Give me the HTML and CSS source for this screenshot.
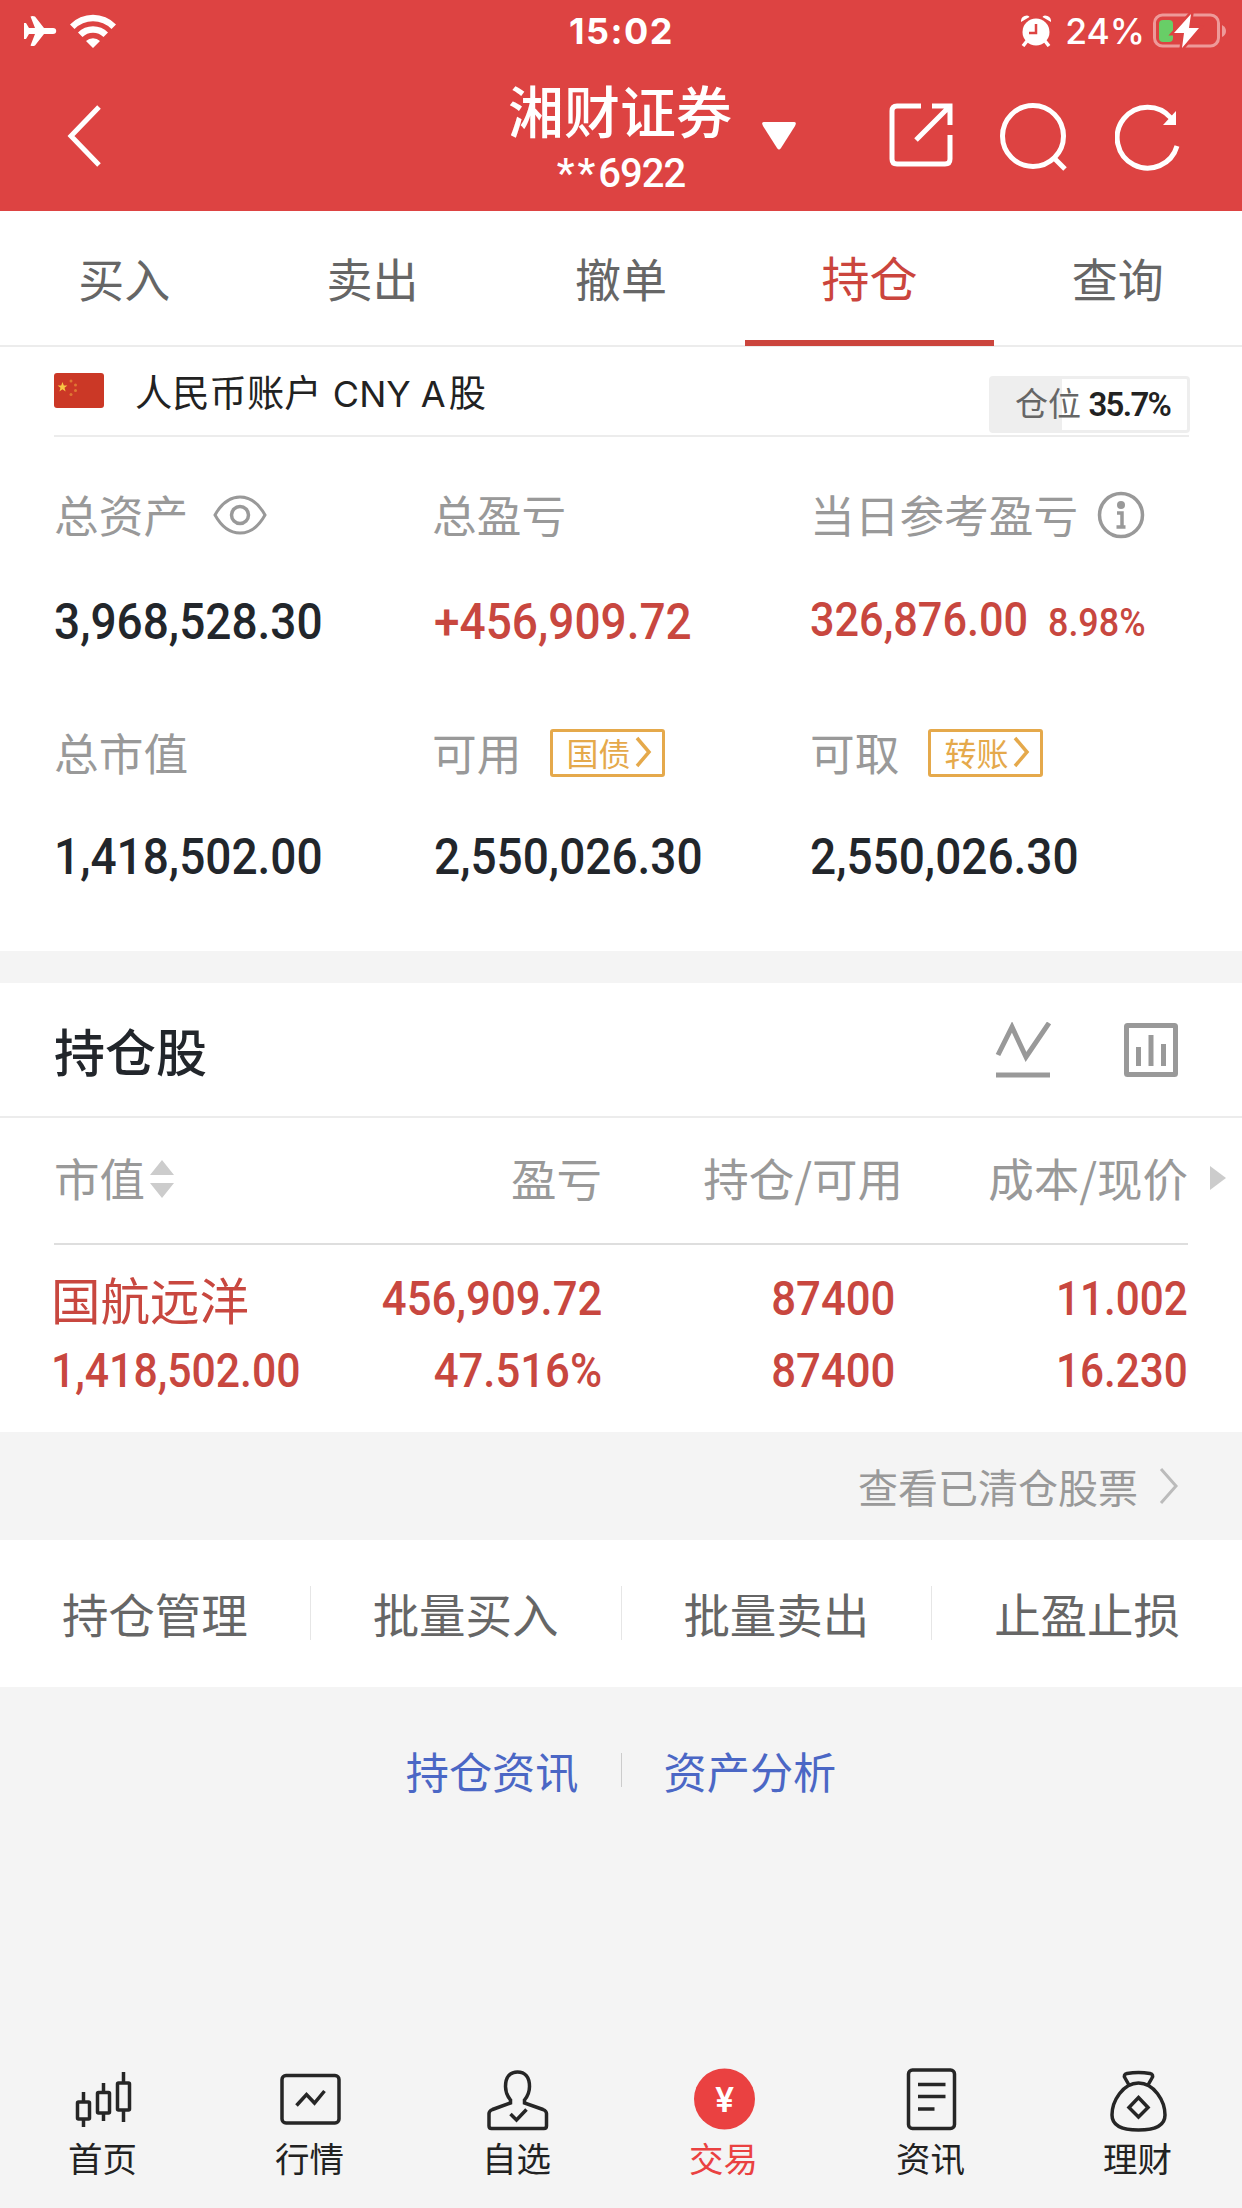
FILE: index.html
```html
<!DOCTYPE html>
<html lang="zh-CN">
<head>
<meta charset="UTF-8">
<title>持仓</title>
<link rel="stylesheet" href="styles.css">
</head>
<body>
  <header class="header">
    <div class="status">
      <div class="status-left">
        <svg width="34" height="30" viewBox="0 0 34 30"><path fill="#fff" d="M0 7h2l3 5h6L6.500 0.500Q8.500-.5 11 .5L20 12h9a3 2.800 0 0 1 0 6h-9L11 29.500Q8.500 30.500 6.500 29.500L11 18H5l-3 5H0z"/></svg>
        <svg width="46" height="34" viewBox="0 0 46 34"><path fill="#fff" d="M0 10.500a32 32 0 0 1 46 0l-4.500 4.500a26 26 0 0 0-37 0zM8 18.500a21 21 0 0 1 30 0l-4.500 4.500a15 15 0 0 0-21 0zM16 27a10 10 0 0 1 14 0l-7 7z"/></svg>
      </div>
      <div class="time">15:02</div>
      <div class="status-right">
        <svg width="30" height="32" viewBox="0 0 30 32"><circle cx="15" cy="17" r="13.500" fill="#fff"/><path d="M0 7Q-.5 1 6 .5q2 0 2.500 1.500zM30 7q.5-6-6-6.500-2 0-2.500 1.500z" fill="#fff"/><path d="M6 26l-4 5M24 26l4 5" stroke="#fff" stroke-width="3.500"/><path d="M15 9v9H8" fill="none" stroke="#dd4342" stroke-width="2.500"/></svg>
        <span class="percent">24%</span>
        <svg width="74" height="36" viewBox="0 0 74 36"><rect x="1.500" y="2" width="64" height="31" rx="8" fill="none" stroke="#ee9a99" stroke-width="3"/><path d="M69 12q4 2 4 6t-4 6z" fill="#ee9a99"/><rect x="6" y="7" width="14" height="22" rx="4" fill="#68ce67"/><path d="M38 1L21 20h10l-2 15 17-20H36z" fill="#fff" stroke="#dd4342" stroke-width="5" paint-order="stroke"/></svg>
      </div>
    </div>
    <div class="nav">
      <svg class="back" width="40" height="64" viewBox="0 0 40 64"><path d="M34 3L6 32l28 29" fill="none" stroke="#fff" stroke-width="5"/></svg>
      <div class="account">
        <div>
          <h1 class="broker">湘财证券</h1>
          <div class="account-no"><span class="stars">**</span>6922</div>
        </div>
        <svg class="caret" width="34" height="28" viewBox="0 0 34 28"><path d="M2 0h30q3 0 1 4L19 26q-2 3-4 0L1 4Q-1 0 2 0z" fill="#fff"/></svg>
      </div>
      <div class="nav-icons">
        <svg width="64" height="64" viewBox="0 0 64 64"><path d="M32 3H8q-5 0-5 5v48q0 5 5 5h48q5 0 5-5V32M43 3h18v19M61 3L27 37" fill="none" stroke="#fff" stroke-width="5"/></svg>
        <svg width="68" height="68" viewBox="0 0 68 68"><circle cx="33" cy="33" r="30.500" fill="none" stroke="#fff" stroke-width="5"/><path d="M54 55l11 11" stroke="#fff" stroke-width="5"/></svg>
        <svg width="66" height="68" viewBox="0 0 66 68"><path d="M62 43A30.500 30.500 0 1 1 56 15" fill="none" stroke="#fff" stroke-width="5"/><path d="M61 8v14H48z" fill="#fff"/></svg>
      </div>
    </div>
  </header>

  <nav class="tabs">
    <a class="tab">买入</a>
    <a class="tab">卖出</a>
    <a class="tab">撤单</a>
    <a class="tab active">持仓</a>
    <a class="tab">查询</a>
  </nav>

  <section class="summary">
    <div class="currency">
      <svg class="flag" width="50" height="35" viewBox="0 0 50 35"><rect width="50" height="35" rx="3" fill="#cb3826"/><path d="M8.500 9l1.300 3.500h3.600l-2.900 2.300 1.100 3.600-3.100-2.200-3.100 2.200 1.100-3.600-2.900-2.300h3.600z" fill="#f8c744"/><g fill="#e07833"><circle cx="17" cy="8" r="1.500"/><circle cx="21.500" cy="12" r="1.500"/><circle cx="21.500" cy="17.500" r="1.500"/><circle cx="17" cy="21.500" r="1.500"/></g></svg>
      <span class="currency-name">人民币账户 <span class="latin">CNY A</span>股</span>
      <div class="position"><span>仓位</span> <b>35.7%</b></div>
    </div>
    <div class="assets">
      <div class="asset">
        <div class="label">总资产
          <svg class="eye" width="54" height="40" viewBox="0 0 54 40"><path d="M2 20Q12 2 27 2t25 18Q42 38 27 38T2 20z" fill="none" stroke="#999" stroke-width="3"/><circle cx="27" cy="20" r="8.500" fill="none" stroke="#999" stroke-width="3.500"/></svg>
        </div>
        <div class="value"><span class="num">3,968,528.30</span></div>
      </div>
      <div class="asset">
        <div class="label">总盈亏</div>
        <div class="value red"><span class="num">+456,909.72</span></div>
      </div>
      <div class="asset">
        <div class="label">当日参考盈亏
          <svg class="info" width="48" height="48" viewBox="0 0 48 48"><circle cx="24" cy="24" r="21.500" fill="none" stroke="#999" stroke-width="3.500"/><circle cx="24" cy="14" r="4" fill="#999"/><path d="M20 22h5v14M19.500 36h9" fill="none" stroke="#999" stroke-width="3.500"/></svg>
        </div>
        <div class="value red today"><span class="num">326,876.00</span><span class="num rate">8.98%</span></div>
      </div>
      <div class="asset lower">
        <div class="label">总市值</div>
        <div class="value"><span class="num">1,418,502.00</span></div>
      </div>
      <div class="asset lower">
        <div class="label">可用
          <span class="tag">国债<svg width="18" height="32" viewBox="0 0 18 32"><path d="M2 2l12 14L2 30" fill="none" stroke="#e5a94b" stroke-width="3.500"/></svg></span>
        </div>
        <div class="value"><span class="num">2,550,026.30</span></div>
      </div>
      <div class="asset lower">
        <div class="label">可取
          <span class="tag">转账<svg width="18" height="32" viewBox="0 0 18 32"><path d="M2 2l12 14L2 30" fill="none" stroke="#e5a94b" stroke-width="3.500"/></svg></span>
        </div>
        <div class="value"><span class="num">2,550,026.30</span></div>
      </div>
    </div>
  </section>

  <section class="holdings">
    <div class="holdings-title">
      <h2>持仓股</h2>
      <svg width="56" height="56" viewBox="0 0 56 56"><path d="M3 33L17 5l14 30L54 1M1 53h54" fill="none" stroke="#999" stroke-width="5"/></svg>
      <svg class="chart" width="54" height="54" viewBox="0 0 54 54"><rect x="2.500" y="2.500" width="49" height="49" rx="1" fill="none" stroke="#999" stroke-width="5"/><path d="M14.500 24v19M27 12v31M39.500 21v22" stroke="#999" stroke-width="5"/></svg>
    </div>
    <div class="row row-head">
      <div class="cell">市值<svg class="sort" width="24" height="40" viewBox="0 0 24 40"><path d="M12 1l12 15H0zM12 39l12-15H0z" fill="#ccc"/></svg></div>
      <div class="cell">盈亏</div>
      <div class="cell">持仓/可用</div>
      <div class="cell">成本/现价</div>
      <svg class="more" width="16" height="24" viewBox="0 0 16 24"><path d="M0 0l16 12L0 24z" fill="#ccc"/></svg>
    </div>
    <div class="row row-stock">
      <div class="cell"><div class="stock">国航远洋</div><div><span class="num">1,418,502.00</span></div></div>
      <div class="cell"><div><span class="num">456,909.72</span></div><div><span class="num">47.516%</span></div></div>
      <div class="cell qty"><div><span class="num">87400</span></div><div><span class="num">87400</span></div></div>
      <div class="cell price"><div><span class="num">11.002</span></div><div><span class="num">16.230</span></div></div>
    </div>
  </section>

  <div class="cleared">查看已清仓股票
    <svg width="20" height="38" viewBox="0 0 20 38"><path d="M2 2l15 17L2 36" fill="none" stroke="#bbb" stroke-width="3"/></svg>
  </div>

  <div class="actions">
    <a>持仓管理</a>
    <a>批量买入</a>
    <a>批量卖出</a>
    <a>止盈止损</a>
  </div>

  <div class="links">
    <a>持仓资讯</a>
    <a>资产分析</a>
  </div>

  <footer class="tabbar">
    <a class="item">
      <svg class="icon" viewBox="0 0 70 70"><rect x="9.500" y="37" width="12" height="17" rx="1"/><path d="M15.500 27v10M15.500 54v8"/><rect x="29.500" y="27.500" width="12" height="20.500" rx="1"/><path d="M35.500 18v10M35.500 48v8"/><rect x="49.500" y="18" width="12" height="27" rx="1"/><path d="M55.500 7v11M55.500 45v12"/></svg>
      首页
    </a>
    <a class="item">
      <svg class="icon" viewBox="0 0 70 70"><rect x="7" y="10.500" width="57" height="47.500" rx="4"/><path d="M21.500 40.500l10-11 8 8.500 10-12"/></svg>
      行情
    </a>
    <a class="item">
      <svg class="icon" viewBox="0 0 70 70"><path d="M28.500 38v-3q-5-6-5-13.500C23.500 12 28 7 35.500 7s12 5 12 14.500q0 7.500-5 13.500v3l18.500 6.500q3.500 1.500 3.500 4V61q0 2.500-2.500 2.500H9.500Q7 63.500 7 61V48.500q0-2.500 3.500-4z"/><path d="M28.500 49l6 6 10-10.500"/></svg>
      自选
    </a>
    <a class="item current">
      <svg class="icon" viewBox="0 0 70 70"><circle class="coin" cx="35.500" cy="34" r="30.500"/><text class="yen" x="35.500" y="47">¥</text></svg>
      交易
    </a>
    <a class="item">
      <svg class="icon" viewBox="0 0 70 70"><rect x="12.500" y="5" width="46" height="58.500" rx="4"/><path d="M22 19.500h27.500M22 31.500h27.500M22 44h16.500"/></svg>
      资讯
    </a>
    <a class="item">
      <svg class="icon" viewBox="0 0 70 70"><path d="M26 20l-4-7q-2-3.500 2-4.500 11.500-2 23 0 4 1 2 4.500l-4 7"/><path d="M35.500 18C20 18 9 36 9 50c0 10 8 15 26.500 15S62 60 62 50C62 36 51 18 35.500 18z"/><path d="M35.500 32.500L45 42.500l-9.500 9.500-9.500-9.500z"/></svg>
      理财
    </a>
  </footer>
</body>
</html>
```
FILE: styles.css
```css
* {
    box-sizing: border-box;
}

body {
    margin: 0;
    width: 1242px;
    height: 2208px;
    overflow: hidden;
    display: flex;
    flex-direction: column;
    background: #f4f4f4;
    font-family: "Noto Sans CJK SC", sans-serif;
    color: #666;
}

svg {
    display: block;
    flex: none;
}

h1, h2 {
    margin: 0;
    font-weight: 500;
}

.num {
    display: inline-block;
    font-family: Roboto, sans-serif;
    font-weight: 500;
    vertical-align: top;
    transform: scaleX(0.92);
    transform-origin: left;
    white-space: nowrap;
}

/* Header */
.header {
    height: 211px;
    background: #dd4342;
    color: #fff;
}

.status {
    display: grid;
    grid-template-columns: 1fr auto 1fr;
    align-items: center;
    height: 62px;
    padding: 0 15px 0 24px;
    font-family: Inter, sans-serif;
    font-size: 35px;
}

.status-left,
.status-right {
    display: flex;
    align-items: center;
    gap: 12px;
}

.status-right {
    justify-content: flex-end;
    gap: 11px;
}

.time {
    font-size: 36px;
    font-weight: 700;
    letter-spacing: 1.500px;
    padding-right: 8px;
}

.percent {
    margin: 0 -3px 0 3px;
    font-size: 35.500px;
    font-weight: 500;
}

.nav {
    display: grid;
    grid-template-columns: 1fr auto 1fr;
    height: 149px;
    padding: 0 61px 0 65px;
}

.back {
    margin-top: 42px;
}

.account {
    display: flex;
    gap: 30px;
    padding-left: 58px;
    text-align: center;
}

.broker {
    font-size: 56px;
    line-height: 60px;
    margin-top: 17px;
}

.account-no {
    font-family: Roboto, sans-serif;
    font-size: 40px;
    font-weight: 500;
    line-height: 44px;
    margin-top: 13px;
    padding-left: 2px;
    letter-spacing: -1px;
}

.stars {
    letter-spacing: 3px;
}

.caret {
    margin-top: 60px;
}

.nav-icons {
    display: flex;
    justify-content: flex-end;
    gap: 47px;
    padding-top: 41px;
}

/* Tabs */
.tabs {
    display: flex;
    height: 136px;
    background: #fff;
    border-bottom: 2px solid #ececec;
}

.tab {
    flex: 1;
    height: 135px;
    font-size: 46px;
    line-height: 132px;
    text-align: center;
}

.tab.active {
    border-bottom: 6px solid #cb453d;
    color: #cb453d;
    font-size: 48px;
    line-height: 131px;
}

/* Account summary */
.summary {
    height: 604px;
    padding: 0 53px 0 54px;
    background: #fff;
}

.currency {
    display: flex;
    height: 90px;
    border-bottom: 2px solid #ececec;
}

.flag {
    margin-top: 26px;
}

.currency-name {
    margin-left: 31px;
    color: #222;
    font-size: 37.300px;
    line-height: 88px;
}

.latin {
    font-family: Inter, sans-serif;
    font-size: 36px;
    margin: 0 3px 0 3px;
}

.position {
    width: 201px;
    height: 57px;
    margin: 29px -1px 0 auto;
    padding-left: 23px;
    border: 3px solid #eee;
    border-radius: 4px;
    background: linear-gradient(to right, #eee 35.700%, #fff 35.700%);
    font-size: 33px;
    line-height: 47px;
    white-space: nowrap;
}

.position b {
    font-family: Roboto, sans-serif;
    font-weight: 600;
    color: #222;
    letter-spacing: -1.700px;
}

.assets {
    display: grid;
    grid-template-columns: 378px 378px 1fr;
    grid-auto-rows: 238px;
    padding-top: 45px;
}

.label {
    display: flex;
    align-items: center;
    height: 64px;
    color: #999;
    font-size: 44.700px;
    line-height: 64px;
    white-space: nowrap;
}

.value {
    display: flex;
    align-items: baseline;
    height: 60px;
    margin-top: 46px;
    color: #22262b;
    font-size: 50px;
    line-height: 60px;
    white-space: nowrap;
}

.value.red {
    color: #c8473f;
}

.asset:nth-child(3n+2) .value {
    padding-left: 2px;
}

.lower .value {
    margin-top: 43px;
}

.value.today {
    margin-top: 44px;
    font-size: 48px;
}

.today .num:first-child {
    transform: scaleX(0.9);
}

.rate {
    margin-left: -4px;
    font-size: 39px;
}

.eye {
    margin: 2px 0 0 25px;
}

.info {
    margin: 2px 0 0 19px;
}

.tag {
    display: flex;
    align-items: center;
    justify-content: space-between;
    width: 115px;
    height: 48px;
    margin: 1px 0 0 29px;
    padding: 0 9px 2px 13px;
    border: 3px solid #e5a94b;
    border-radius: 3px;
    color: #e5a94b;
    font-size: 32px;
    line-height: 38px;
}

/* Holdings */
.holdings {
    margin-top: 32px;
    height: 449px;
    background: #fff;
}

.holdings-title {
    display: flex;
    align-items: center;
    height: 135px;
    padding: 0 64px 0 54px;
    border-bottom: 2px solid #ececec;
}

.holdings-title h2 {
    flex: 1;
    color: #22262b;
    font-size: 51px;
    line-height: 60px;
}

.chart {
    margin-left: 73px;
}

.row {
    display: grid;
    grid-template-columns: 280px 268px 301px 285px;
    margin: 0 54px;
    text-align: right;
}

.row .cell:first-child {
    text-align: left;
}

.row-head {
    position: relative;
    height: 127px;
    border-bottom: 2px solid #dedede;
    color: #999;
    font-size: 45.500px;
    line-height: 118px;
}

.row-head .cell:first-child {
    display: flex;
    align-items: center;
    height: 118px;
}

.sort {
    margin: 4px 0 0 5px;
}

.more {
    position: absolute;
    right: -38px;
    top: 48px;
}

.row-stock {
    padding-top: 18px;
    color: #c8473f;
    font-size: 48px;
    line-height: 72px;
}

.row-stock .num {
    transform: scaleX(0.91);
    transform-origin: right;
}

.row-stock .cell:first-child {
    margin-left: -3px;
}

.row-stock .cell:first-child .num {
    transform: scaleX(0.89);
    transform-origin: left;
}

.row-stock .price .num {
    transform: scaleX(0.88);
}

.stock {
    font-size: 49.500px;
}

.qty {
    padding-right: 8px;
}

/* Links below the list */
.cleared {
    display: flex;
    align-items: center;
    justify-content: flex-end;
    gap: 21px;
    height: 108px;
    padding-right: 63px;
    color: #999;
    font-size: 40px;
}

.actions {
    display: flex;
    align-items: center;
    height: 147px;
    padding-bottom: 2px;
    background: #fff;
    font-size: 46.500px;
    line-height: 54px;
}

.actions a {
    flex: 1;
    text-align: center;
}

.actions a:not(:last-child) {
    border-right: 1px solid #e6e6e6;
}

.links {
    display: flex;
    justify-content: center;
    margin-top: 66px;
    color: #4b67c5;
    font-size: 43.200px;
    line-height: 34px;
}

.links a {
    padding: 0 42px;
}

.links a + a {
    border-left: 1px solid #ccc;
}

/* Bottom bar */
.tabbar {
    display: flex;
    height: 143px;
    margin: auto 1px 0 -1px;
}

.item {
    flex: 1;
    display: flex;
    flex-direction: column;
    align-items: center;
    color: #222;
    font-size: 34.500px;
    line-height: 44px;
}

.item.current {
    color: #ea4141;
}

.icon {
    width: 70px;
    height: 70px;
    fill: none;
    stroke: #262626;
    stroke-width: 3.500px;
}

.coin {
    fill: #ea4141;
    stroke: none;
}

.yen {
    fill: #fff;
    stroke: none;
    font-family: Inter, sans-serif;
    font-size: 34px;
    font-weight: 600;
    text-anchor: middle;
}
```
